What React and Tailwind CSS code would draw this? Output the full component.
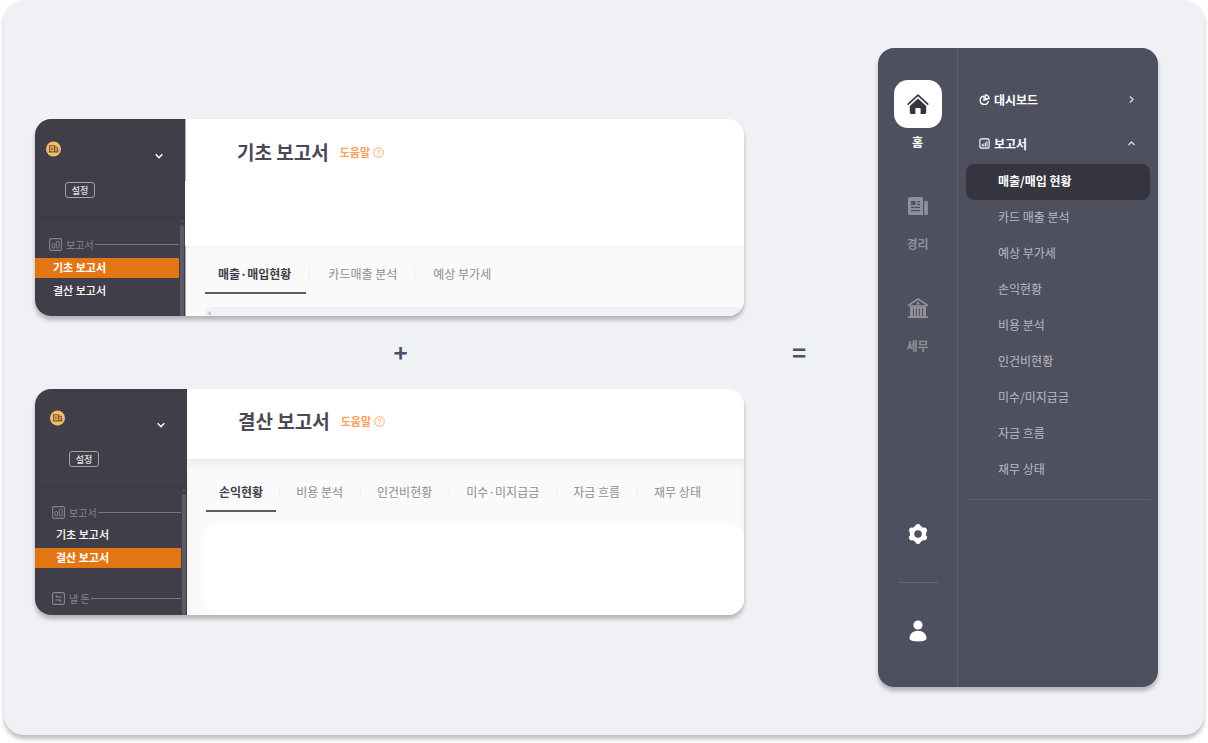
import clsx from "clsx";

const basicTabs = ["매출·매입현황", "카드매출 분석", "예상 부가세"];
const closingTabs = ["손익현황", "비용 분석", "인건비현황", "미수·미지급금", "자금 흐름", "재무 상태"];

const reportMenu = [
  "매출/매입 현황",
  "카드 매출 분석",
  "예상 부가세",
  "손익현황",
  "비용 분석",
  "인건비현황",
  "미수/미지급금",
  "자금 흐름",
  "재무 상태",
];

function CompanyIcon() {
  return (
    <svg className="size-4" viewBox="0 0 16 16" fill="none">
      <circle cx="7.5" cy="8" r="7.5" fill="#f6bd68" />
      <path d="M3.6 4.8h5v6h-5zM8.6 6.3h1.6c.9 0 1.5.6 1.5 1.4v3.1H8.6M2.8 10.9h9.6" stroke="#6b5638" strokeWidth="1.1" />
      <path d="M5.4 6.6v2.6M6.9 6.6v2.6M10.2 8v1.6" stroke="#6b5638" strokeWidth="0.9" />
    </svg>
  );
}

function Chevron({ className }) {
  return (
    <svg className={className} viewBox="0 0 10 10" fill="none" stroke="currentColor">
      <path d="M2.2 3.6 5 6.4l2.8-2.8" strokeWidth="1.3" />
    </svg>
  );
}

function ReportIcon() {
  return (
    <svg className="size-[13px] shrink-0" viewBox="0 0 13 13" fill="none" stroke="currentColor">
      <rect x="0.6" y="0.6" width="11.8" height="11.8" rx="1.5" strokeWidth="1.1" />
      <rect x="3.1" y="5.6" width="2.6" height="4.4" rx="0.8" strokeWidth="1" />
      <rect x="7.3" y="3.4" width="2.8" height="6.6" rx="0.8" strokeWidth="1" />
    </svg>
  );
}

function PayIcon() {
  return (
    <svg className="size-[13px] shrink-0" viewBox="0 0 13 13" fill="none" stroke="currentColor">
      <rect x="0.6" y="0.6" width="11.8" height="11.8" rx="1.5" strokeWidth="1.1" />
      <path d="M9.6 5H4M5.4 3.4 3.7 5M3.4 8H9M7.6 9.6 9.3 8" strokeWidth="1.2" />
    </svg>
  );
}

function HelpIcon() {
  return (
    <svg className="size-[11px]" viewBox="0 0 11 11" fill="none" stroke="currentColor">
      <circle cx="5.5" cy="5.5" r="4.8" strokeWidth="0.9" />
      <path d="M4.1 4.5c0-.9.6-1.4 1.4-1.4s1.4.5 1.4 1.2c0 .9-1.4 1-1.4 2.1M5.5 7.3v.9" strokeWidth="0.9" />
    </svg>
  );
}

function SectionLabel({ icon, children }) {
  return (
    <div className="flex h-5 items-center text-[10px] text-[#85858e]">
      {icon}
      <span className="ml-1 shrink-0">{children}</span>
      <span className="ml-px h-px flex-1 bg-[#77777f]" />
    </div>
  );
}

function OldSidebar({ active, wide, more }) {
  return (
    <aside className={clsx("flex shrink-0 flex-col bg-[#403f49]", wide ? "w-[152px]" : "w-[150px]")}>
      <div
        className={clsx(
          "flex flex-col items-start pr-5 shadow-[0_2px_3px_rgba(0,0,0,0.08)]",
          wide ? "h-[97px] pl-[15px] pt-[21px]" : "h-[98px] pl-[11px] pt-[22px]"
        )}
      >
        <button type="button" aria-label="회사 선택" className="flex w-full items-start justify-between text-white">
          <CompanyIcon />
          <Chevron className="mt-[9px] size-[12px]" />
        </button>
        <button
          type="button"
          className="ml-[19px] mt-[20px] h-4 w-[30px] rounded-[3px] border border-[#a3a3ab] text-[9px] leading-[13px] font-medium text-[#e3e3e8]"
        >
          설정
        </button>
      </div>
      <div className="flex flex-1 pr-px">
        <nav className={clsx("flex-1", wide ? "pt-4" : "pt-[17px]")}>
          <div className={wide ? "pl-[17px]" : "pl-[14px]"}>
            <SectionLabel icon={<ReportIcon />}>보고서</SectionLabel>
          </div>
          <ul className={clsx("space-y-[3px] text-[11px] leading-[18px] text-white", wide ? "mt-[3px]" : "mt-1")}>
            {["기초 보고서", "결산 보고서"].map((name) => (
              <li key={name}>
                <a
                  href="#"
                  className={clsx(
                    "block pb-[2px]",
                    wide ? "pl-[21px]" : "pl-[18px]",
                    name === active ? "bg-[#e27615] font-bold" : "font-medium"
                  )}
                >
                  {name}
                </a>
              </li>
            ))}
          </ul>
          {more && (
            <div className="mt-5 pl-[17px]">
              <SectionLabel icon={<PayIcon />}>낼 돈</SectionLabel>
            </div>
          )}
        </nav>
        <div className="ml-px flex w-1 flex-col pt-[2px]">
          <span className="h-[3px] w-1 bg-[#56555f] [clip-path:polygon(50%_0,100%_100%,0_100%)]" />
          <span className="mt-[3px] flex-1 rounded-t-full bg-[#5c5b65]" />
        </div>
      </div>
    </aside>
  );
}

function Title({ children }) {
  return (
    <div className="flex items-center pl-[51px]">
      <h2 className="text-[19px] leading-7 font-bold text-[#4b4a54]">{children}</h2>
      <a href="#" className="ml-[11px] flex items-center gap-[3px] text-[11px] font-bold text-[#f9a25d]">
        도움말
        <HelpIcon />
      </a>
    </div>
  );
}

function Tabs({ items, tight }) {
  return (
    <div className="flex items-start whitespace-nowrap text-xs">
      {items.map((item, i) => (
        <div key={item} className="flex items-start">
          {i > 0 && (
            <span className={clsx("ml-[3px] mt-[3px] h-[14px] w-px bg-[#f0f0f2]", tight ? "mr-[2px]" : "mr-1")} />
          )}
          <button
            type="button"
            className={clsx(
              "h-[30px] pb-[10px] leading-5",
              i === 0 ? "border-b-2 border-[#5b5a66] px-[13px] font-bold text-[#403f49]" : "px-[14px] text-[#8d8d95]",
              i === 0 && !tight && "pr-[15px]"
            )}
          >
            {item}
          </button>
        </div>
      ))}
    </div>
  );
}

function Screen({ children }) {
  return (
    <section className="flex overflow-hidden rounded-2xl bg-white shadow-[0_4px_4px_rgba(0,0,0,0.25)]">
      {children}
    </section>
  );
}

function HomeIcon() {
  return (
    <svg className="size-6" viewBox="0 0 24 24" fill="none">
      <path d="M2.2 12.2 12 3.2l9.8 9" stroke="#36353f" strokeWidth="1.6" strokeLinecap="round" strokeLinejoin="round" />
      <path d="M12 6.4 20.2 14v6.6a1.4 1.4 0 0 1-1.4 1.4h-4.2v-5.2a.8.8 0 0 0-.8-.8h-3.6a.8.8 0 0 0-.8.8V22H5.2a1.4 1.4 0 0 1-1.4-1.4V14z" fill="#36353f" />
    </svg>
  );
}

function LedgerIcon() {
  return (
    <svg className="size-6" viewBox="0 0 24 24" fill="currentColor">
      <path
        fillRule="evenodd"
        d="M3.6 3h11.8A1.6 1.6 0 0 1 17 4.6v14.9a1.5 1.5 0 0 0 1 1.5H3.6A1.6 1.6 0 0 1 2 19.4V4.6A1.6 1.6 0 0 1 3.6 3zM5 7v4h4.5V7zM11 7v1.2h3V7zM11 9.8V11h3V9.8zM5 12.8V14h9v-1.2zM5 16v1.2h9V16z"
      />
      <path d="M18.2 7h2.4a1.3 1.3 0 0 1 1.3 1.3v11.2a1.5 1.5 0 0 1-1.5 1.5h-.7a1.5 1.5 0 0 1-1.5-1.5z" />
    </svg>
  );
}

function BankIcon() {
  return (
    <svg className="size-6" viewBox="0 0 24 24" fill="none" stroke="currentColor">
      <path d="M2.8 9 12 3l9.2 6" strokeWidth="1.5" strokeLinecap="round" strokeLinejoin="round" />
      <circle cx="12" cy="7.4" r="1.3" fill="currentColor" stroke="none" />
      <path d="M2.6 9.8h18.8" strokeWidth="1.5" />
      <path
        d="M4 10.500h16V21H4zM7 12.500V20h1V12.500zM10 12.500V20h1V12.500zM13 12.500V20h1V12.500zM16 12.500V20h1V12.500z"
        fill="currentColor"
        fillRule="evenodd"
        stroke="none"
      />
      <path d="M2 21.2h20" strokeWidth="1.7" />
    </svg>
  );
}

function GearIcon() {
  return (
    <svg className="size-6" viewBox="0 0 24 24" fill="none" stroke="currentColor">
      <circle cx="12" cy="12" r="6" strokeWidth="4.4" />
      {[0, 60, 120, 180, 240, 300].map((deg) => (
        <path key={deg} d="M12 5.4v-.7" strokeWidth="5.4" strokeLinecap="round" transform={`rotate(${deg} 12 12)`} />
      ))}
    </svg>
  );
}

function UserIcon() {
  return (
    <svg className="size-6" viewBox="0 0 24 24" fill="currentColor">
      <circle cx="12" cy="6" r="4.6" />
      <path d="M3.5 19.5c0-4.8 3.6-7.8 8.5-7.8s8.5 3 8.5 7.8c0 2-4 2.900-8.500 2.900s-8.500-.9-8.500-2.900z" />
    </svg>
  );
}

function PieIcon() {
  return (
    <svg className="size-[11px]" viewBox="0 0 11 11" fill="none" stroke="currentColor" strokeWidth="1.3">
      <path d="M5.200 2.200a4.100 4.100 0 1 0 4.200 4.600" />
      <path d="M6.300.9a3.700 3.700 0 0 1 3.800 3.800L6.300 4.600z" />
      <path d="M5 2.300v4l3.800-1.400" />
    </svg>
  );
}

function ChartIcon() {
  return (
    <svg className="size-[11px]" viewBox="0 0 11 11" fill="none" stroke="currentColor">
      <rect x="0.9" y="0.9" width="9.2" height="9.2" rx="1.3" strokeWidth="1.1" />
      <path d="M3.2 6.2v2.4M4.8 5.4v3.2M6.4 4.4v4.2M8 3v5.6" strokeWidth="0.9" />
    </svg>
  );
}

function Rail() {
  return (
    <nav className="flex w-20 shrink-0 flex-col items-center border-r border-[#5f606f] pt-8 text-xs leading-5 font-bold text-[#8f9099]">
      <a href="#" className="flex flex-col items-center gap-1 text-white">
        <span className="flex size-12 items-center justify-center rounded-[14px] bg-white">
          <HomeIcon />
        </span>
        홈
      </a>
      <a href="#" className="mt-[42px] flex flex-col items-center gap-4">
        <LedgerIcon />
        경리
      </a>
      <a href="#" className="mt-[42px] flex flex-col items-center gap-4">
        <BankIcon />
        세무
      </a>
      <button type="button" aria-label="환경설정" className="mt-auto text-white">
        <GearIcon />
      </button>
      <hr className="mt-9 w-10 border-[#666775]" />
      <button type="button" aria-label="내 정보" className="mt-9 mb-11 text-white">
        <UserIcon />
      </button>
    </nav>
  );
}

function NewMenu() {
  return (
    <div className="flex-1 px-2 pt-8 text-xs">
      <button type="button" className="flex h-10 w-full items-center gap-1 pb-px px-[13px] font-bold text-white">
        <PieIcon />
        대시보드
        <Chevron className="ml-auto size-[11px] -rotate-90 text-[#d5d5da]" />
      </button>
      <button type="button" className="mt-1 flex h-10 w-full items-center gap-1 pb-px px-[13px] font-bold text-white">
        <ChartIcon />
        보고서
        <Chevron className="ml-auto size-[11px] rotate-180 text-[#d5d5da]" />
      </button>
      <ul className="border-b border-[#5f606f] pb-[11px]">
        {reportMenu.map((item, i) => (
          <li key={item}>
            <a
              href="#"
              className={clsx(
                "flex h-9 items-center rounded-lg pb-[2px] pl-8",
                i === 0 ? "bg-[#36353f] font-bold text-white" : "text-[#b9bac3]"
              )}
            >
              {item}
            </a>
          </li>
        ))}
      </ul>
    </div>
  );
}

export default function App() {
  return (
    <div className="bg-white px-1 pb-2 font-['Noto_Sans_CJK_KR',sans-serif]">
      <main className="flex items-start rounded-[20px] bg-[#f0f1f5] py-12 pl-[31px] pr-[46px] shadow-[0_4px_4px_rgba(0,0,0,0.25)]">
        <div className="min-w-0 flex-1 pt-[71px]">
          <Screen>
            <OldSidebar active="기초 보고서" />
            <div className="flex h-[197px] flex-1 flex-col">
              <div className="flex h-[127px] items-start">
                <span className="h-[62px] w-px bg-[#aaaab0]" />
                <div className="pt-[19px]">
                  <Title>기초 보고서</Title>
                </div>
              </div>
              <div className="flex flex-1 flex-col border-l border-[#aaaab0] bg-[#fafafa] pl-[19px] pt-[18px] shadow-[inset_0_3px_3px_rgba(0,0,0,0.02)]">
                <Tabs items={basicTabs} />
                <div className="mt-[13px] flex-1 rounded-tl-lg bg-[#f0f1f5] pl-[2px] pt-1">
                  <span className="block h-[5px] w-1 bg-[#c9c9ce] [clip-path:polygon(0_50%,100%_0,100%_100%)]" />
                </div>
              </div>
            </div>
          </Screen>

          <p className="flex h-[73px] items-center justify-center pb-[2px] pl-[22px] text-[24px] font-bold text-[#4f505f]">+</p>

          <Screen>
            <OldSidebar active="결산 보고서" wide more />
            <div className="flex h-[226px] flex-1 flex-col">
              <div className="h-[70px] pt-[18px]">
                <Title>결산 보고서</Title>
              </div>
              <div className="flex flex-1 flex-col bg-[#fafafa] pl-4 pt-[23px] shadow-[inset_0_6px_6px_rgba(0,0,0,0.05)]">
                <div className="pl-[3px]">
                  <Tabs items={closingTabs} tight />
                </div>
                <div className="mt-[11px] flex-1 rounded-2xl bg-white" />
              </div>
            </div>
          </Screen>
        </div>

        <p className="mt-[286px] w-[134px] shrink-0 pl-12 text-[24px] leading-9 font-bold text-[#4f505f]">=</p>

        <aside className="flex min-h-[639px] w-[280px] shrink-0 overflow-hidden rounded-2xl bg-[#4f505f] shadow-[0_4px_4px_rgba(0,0,0,0.25)]">
          <Rail />
          <NewMenu />
        </aside>
      </main>
    </div>
  );
}
